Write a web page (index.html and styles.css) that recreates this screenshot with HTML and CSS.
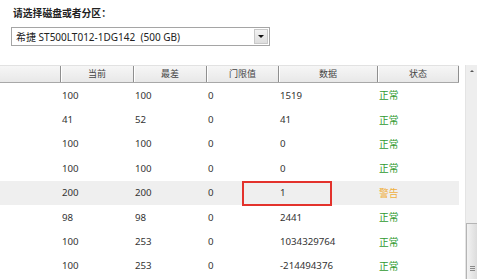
FILE: index.html
```html
<!DOCTYPE html>
<html lang="zh">
<head>
<meta charset="utf-8">
<link rel="stylesheet" href="styles.css">
</head>
<body>
<div class="title">请选择磁盘或者分区：</div>
<div class="select">
  <span class="select-text">希捷 ST500LT012-1DG142&nbsp;&nbsp;(500 GB)</span>
  <span class="select-btn"><span class="tri"></span></span>
</div>
<div class="panel">
  <div class="table">
    <div class="row head">
      <div class="hc"></div>
      <div class="hc">当前</div>
      <div class="hc">最差</div>
      <div class="hc">门限值</div>
      <div class="hc">数据</div>
      <div class="hc last">状态</div>
    </div>
    <div class="row"><div></div><div>100</div><div>100</div><div>0</div><div>1519</div><div class="ok">正常</div></div>
    <div class="row"><div></div><div>41</div><div>52</div><div>0</div><div>41</div><div class="ok">正常</div></div>
    <div class="row"><div></div><div>100</div><div>100</div><div>0</div><div>0</div><div class="ok">正常</div></div>
    <div class="row"><div></div><div>100</div><div>100</div><div>0</div><div>0</div><div class="ok">正常</div></div>
    <div class="row sel"><div></div><div>200</div><div>200</div><div>0</div><div>1</div><div class="warn">警告</div></div>
    <div class="row"><div></div><div>98</div><div>98</div><div>0</div><div>2441</div><div class="ok">正常</div></div>
    <div class="row"><div></div><div>100</div><div>253</div><div>0</div><div>1034329764</div><div class="ok">正常</div></div>
    <div class="row"><div></div><div>100</div><div>253</div><div>0</div><div>-214494376</div><div class="ok">正常</div></div>
    <div class="mark"></div>
  </div>
  <div class="scrollbar">
    <div class="up"></div>
    <div class="thumb"><span class="grip"></span></div>
  </div>
</div>
</body>
</html>
```
FILE: styles.css
```css
html, body {
  margin: 0;
  padding: 0;
  background: #ffffff;
  width: 477px;
  height: 280px;
  overflow: hidden;
  font-family: "Noto Sans", "Noto Sans CJK SC", sans-serif;
  color: #333333;
}

.title {
  padding: 6px 0 0 13px;
  height: 15px;
  font-size: 9.8px;
  font-weight: bold;
  line-height: 15px;
  color: #222222;
}

.select {
  margin: 6px 0 0 11px;
  width: 259px;
  height: 19px;
  box-sizing: border-box;
  border: 1px solid #a5a5a5;
  display: flex;
  align-items: center;
  justify-content: space-between;
  padding: 1px;
  background: #ffffff;
}

.select-text {
  padding-left: 3px;
  font-size: 10px;
  color: #222222;
  white-space: nowrap;
}

.select-btn {
  width: 14px;
  height: 15px;
  box-sizing: border-box;
  border: 1px solid #c8c8c8;
  background: linear-gradient(#f2f2f2, #dedede);
  display: flex;
  align-items: center;
  justify-content: center;
}

.tri {
  width: 0;
  height: 0;
  border-left: 3px solid transparent;
  border-right: 3px solid transparent;
  border-top: 3px solid #111111;
}

.panel {
  margin-top: 19px;
  display: flex;
  height: 214px;
}

.table {
  position: relative;
  width: 459px;
}

.row {
  display: grid;
  grid-template-columns: 61px 73px 73px 72px 99px 81px;
  height: 24.4px;
  align-items: center;
  font-size: 9.7px;
}

.row > div {
  padding-left: 1px;
  white-space: nowrap;
}

.row.head {
  height: 18px;
  box-sizing: border-box;
  background: linear-gradient(#f6f6f6, #e8e8e8);
  border-top: 1px solid #e2e2e2;
  border-bottom: 1px solid #a8a8a8;
  align-items: stretch;
}

.row.head .hc {
  padding: 0;
  border-right: 1px solid #8f8f8f;
  box-shadow: 1px 0 0 #ffffff;
  text-align: center;
  line-height: 16px;
  font-size: 9px;
  color: #444444;
}

.row.sel {
  background: #efefef;
}

.ok {
  color: #2f9a2f;
}

.warn {
  color: #f0b040;
}

.mark {
  position: absolute;
  left: 242px;
  top: 116px;
  width: 90px;
  height: 25px;
  box-sizing: border-box;
  border: 2px solid #e3322c;
}

.scrollbar {
  margin-left: 6px;
  width: 12px;
  background: #eeeeee;
  border-left: 1px solid #e4e4e4;
  display: flex;
  flex-direction: column;
  justify-content: space-between;
  position: relative;
}

.up {
  margin: 5px auto 0 auto;
  width: 0;
  height: 0;
  border-left: 2px solid transparent;
  border-right: 2px solid transparent;
  border-bottom: 2px solid #555555;
}

.thumb {
  height: 56px;
  box-sizing: border-box;
  border: 1px solid #b4b4b4;
  border-right: none;
  border-bottom: none;
  background: linear-gradient(90deg, #f2f2f2, #dcdcdc);
  display: flex;
  align-items: flex-end;
  justify-content: center;
  padding-bottom: 8px;
}

.grip {
  width: 5px;
  height: 5px;
  background: repeating-linear-gradient(#8a8a8a 0 1px, transparent 1px 2px);
}
```
